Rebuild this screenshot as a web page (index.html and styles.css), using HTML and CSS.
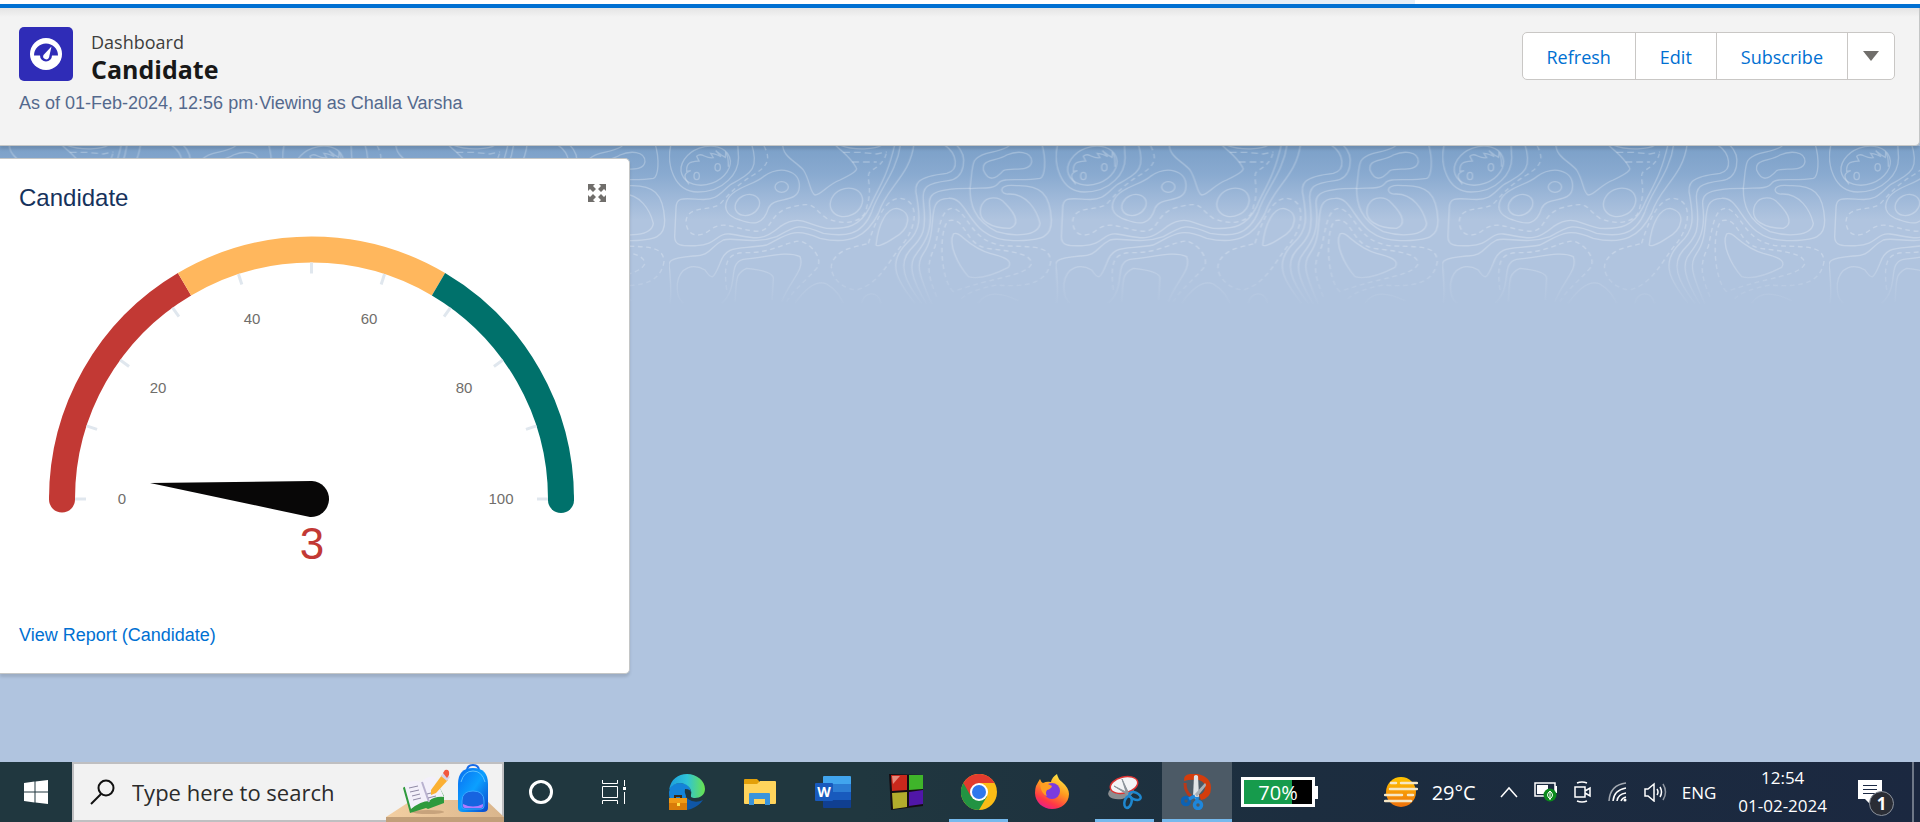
FILE: index.html
```html
<!DOCTYPE html>
<html lang="en">
<head>
<meta charset="utf-8">
<title>Candidate | Dashboard</title>
<link rel="stylesheet" href="styles.css">
</head>
<body>
<div class="nav-strip"><span class="nav-tab"></span></div>

<header class="page-header">
  <div class="heading">
    <div class="identity">
      <svg class="entity-icon" viewBox="0 0 54 54" aria-hidden="true">
        <rect width="54" height="54" rx="5" fill="#2f2cb7"/>
        <circle cx="27" cy="27" r="16" fill="#fff"/>
        <path d="M15 28.500a12 12 0 1 1 24 0h-6a6 6 0 0 1-12 0z" fill="#2f2cb7"/>
        <path d="M32.500 19.500L30 30.500a3 3 0 1 1-5.500-2.500z" fill="#fff"/>
      </svg>
      <div class="titles">
        <span class="kind">Dashboard</span>
        <h1 class="name">Candidate</h1>
      </div>
    </div>
    <p class="as-of">As of 01-Feb-2024, 12:56 pm·Viewing as Challa Varsha</p>
  </div>
  <div class="actions">
    <button class="action">Refresh</button>
    <button class="action">Edit</button>
    <button class="action">Subscribe</button>
    <button class="action action-more" aria-label="More actions"><svg width="16" height="10" viewBox="0 0 16 10"><path d="M0 0h16L8 10z" fill="#706e6b"/></svg></button>
  </div>
</header>

<main class="canvas">
  <svg class="topo" aria-hidden="true">
    <defs>
      <linearGradient id="sky" x1="0" y1="0" x2="0" y2="1">
        <stop offset="0" stop-color="#7ba0c8"/>
        <stop offset=".16" stop-color="#89aad0"/>
        <stop offset=".3" stop-color="#9fb9d9"/>
        <stop offset=".42" stop-color="#b0c4df"/>
        <stop offset="1" stop-color="#b0c4df"/>
      </linearGradient>
      <linearGradient id="fade" x1="0" y1="0" x2="0" y2="1">
        <stop offset=".62" stop-color="#b0c4df" stop-opacity="0"/>
        <stop offset=".92" stop-color="#b0c4df"/>
      </linearGradient>
      <pattern id="contours" x="147" y="0" width="1160" height="600" patternUnits="userSpaceOnUse" patternTransform="translate(620 -16) scale(.33333)">
        <g transform="translate(-147 0)" fill="none" stroke="#fff" stroke-opacity=".26" stroke-width="4">
          <path d="M152 48C140 100 160 186 233 186C310 186 360 130 355 75L353 40"/>
          <ellipse cx="257" cy="107" rx="76" ry="56" transform="rotate(-20 257 107)"/>
          <path d="M207 163C190 140 190 130 212 122L200 124C198 95 215 95 237 93L230 79C245 65 255 87 280 83L272 70C285 72 300 78 303 80L287 62L304 75L316 82L317 68C325 75 325 95 325 110"/>
          <ellipse cx="230" cy="138" rx="8" ry="11"/><ellipse cx="293" cy="112" rx="8" ry="11"/>
          <path d="M394 40C420 120 390 130 330 165C300 190 290 212 240 208C190 205 168 200 168 235L164 320C164 350 190 348 230 347C290 345 290 308 330 312C400 322 420 340 480 290C540 250 560 285 620 295C680 298 720 290 750 230C770 180 800 150 825 40"/>
          <path stroke-dasharray="14 11" d="M432 48C455 90 440 110 400 135C350 165 330 190 300 222C270 245 200 225 198 275C200 320 240 325 270 300C310 270 340 295 400 303C460 310 440 260 500 235C590 210 570 230 620 265C680 290 735 275 740 230C760 170 735 140 750 125C790 100 795 85 800 65"/>
          <path d="M328 200C350 170 400 165 430 140C480 105 540 120 538 170C535 225 460 195 445 235C430 285 400 285 360 270C310 255 310 225 328 200Z"/>
          <ellipse cx="382" cy="225" rx="38" ry="30" transform="rotate(-25 382 225)"/><ellipse cx="485" cy="171" rx="20" ry="16"/>
          <path d="M488 40C485 80 530 95 550 120C570 150 570 190 585 195C605 195 620 165 660 150C700 130 715 120 708 112C690 80 665 65 645 44"/>
          <ellipse cx="679" cy="217" rx="50" ry="41" transform="rotate(-25 679 217)"/>
          <path d="M842 40C830 130 775 180 755 245C725 320 670 320 610 310C540 280 530 285 470 320C400 345 340 320 310 330C270 350 270 380 220 378C140 385 145 395 149 420C152 460 155 490 150 520"/>
          <path d="M882 40C870 140 800 170 775 250C740 320 690 345 600 325C520 290 500 315 440 345C360 360 320 340 300 400C280 450 275 450 255 420C220 400 180 410 172 460C170 500 180 510 190 520"/>
          <path d="M768 345C775 280 800 235 830 235C880 245 870 300 820 325C790 345 770 350 768 345Z"/>
          <path stroke-dasharray="14 11" d="M745 340C770 260 800 205 840 205C900 210 890 290 850 340C800 400 780 460 710 480C650 475 620 420 640 390C665 350 720 350 745 340"/>
          <path d="M975 46C1010 70 1020 120 980 130C890 140 880 160 890 200C900 260 905 300 860 340C800 400 830 450 885 520"/>
          <path d="M1010 46C1045 80 1035 145 985 152C920 160 905 170 910 215C920 300 910 320 870 360C835 400 850 450 905 520"/>
          <path d="M1050 175C920 175 925 200 930 240C935 300 920 330 890 370C865 400 870 440 920 522"/>
          <path d="M935 522C890 420 890 400 910 370C960 300 910 205 985 205C1050 200 1040 330 1180 332C1270 332 1295 320 1294 270C1290 190 1260 165 1190 167C1130 160 1140 195 1165 192C1220 190 1250 240 1260 280C1255 320 1180 320 1130 305C1060 270 1050 220 1050 175C1060 100 1050 85 1100 70C1150 60 1170 50 1172 40"/>
          <path d="M1090 120C1085 85 1130 95 1160 75C1190 62 1235 62 1235 95C1230 130 1170 110 1150 122C1125 150 1105 155 1090 120Z"/>
          <path d="M1265 40C1280 90 1275 140 1260 145C1200 155 1150 140 1135 160C1120 180 1080 172 1050 176"/>
          <path d="M1085 225C1100 195 1140 200 1155 220C1195 260 1195 285 1170 295C1120 295 1065 275 1085 225Z"/>
          <path d="M1000 312C985 340 1010 400 1045 440C1080 450 1130 430 1165 412C1180 390 1150 380 1110 370C1040 350 1020 300 1000 312Z"/>
          <path stroke-dasharray="14 11" d="M1000 485C960 450 955 300 985 272C1040 260 1030 340 1100 355C1180 365 1230 370 1235 400C1220 440 1120 440 1000 485"/>
          <path stroke-dasharray="14 11" d="M950 500C920 430 920 400 945 350C960 280 965 235 1000 235C1050 250 1050 340 1160 348C1250 350 1290 350 1292 395C1280 470 1200 470 1130 465C1060 480 1040 490 1020 510"/>
          <path stroke-dasharray="14 11" d="M320 480C310 400 320 370 370 368C460 370 480 340 540 333C580 345 610 390 590 415C560 450 520 480 500 515"/>
          <path d="M305 520C360 470 320 400 370 388C430 385 500 360 540 380C555 420 510 450 485 515"/>
          <path d="M345 515C350 450 345 430 380 415C430 420 460 430 460 445L456 510"/>
          <path d="M525 520C560 470 590 450 620 462C650 480 660 500 670 520M725 520C730 485 775 480 783 520M1075 520C1100 480 1150 490 1195 512"/>
          <path d="M662 46C700 62 770 58 784 46"/>
          <path stroke-dasharray="20 12" d="M670 67H720L770 72L800 66M697 96H770"/>
        </g>
      </pattern>
    </defs>
    <rect width="100%" height="176" fill="url(#sky)"/>
    <rect width="100%" height="176" fill="url(#contours)"/>
    <rect width="100%" height="176" fill="url(#fade)"/>
  </svg>

  <section class="card">
    <div class="card-head">
      <h2 class="card-title">Candidate</h2>
      <button class="expand" aria-label="Expand"><svg width="18" height="18" viewBox="0 0 18 18"><g fill="#706e6b"><path d="M0 0h7L5 2l3 3-3 3-3-3-2 2z"/><path d="M18 0v7l-2-2-3 3-3-3 3-3-2-2z"/><path d="M0 18v-7l2 2 3-3 3 3-3 3 2 2z"/><path d="M18 18h-7l2-2-3-3 3-3 3 3 2-2z"/></g></svg></button>
    </div>
    <svg class="gauge" viewBox="0 0 624 350" role="img" aria-label="Gauge: 3 of 100">
      <g fill="none" stroke-width="26">
        <path d="M62 269V269.500" stroke="#c23934" stroke-linecap="round"/>
        <path d="M561 269V270" stroke="#00716b" stroke-linecap="round"/>
        <path d="M62 270V269A249.500 249.500 0 0 1 184.500 54.240" stroke="#c23934"/>
        <path d="M184.500 54.240A249.500 249.500 0 0 1 438.500 54.240" stroke="#ffb75d"/>
        <path d="M438.500 54.240A249.500 249.500 0 0 1 561 269V271" stroke="#00716b"/>
      </g>
      <g stroke="#e0e7ee" stroke-width="3">
        <path id="tick" d="M75 269h11"/>
        <use href="#tick" transform="rotate(18 311.500 269)"/><use href="#tick" transform="rotate(36 311.500 269)"/>
        <use href="#tick" transform="rotate(54 311.500 269)"/><use href="#tick" transform="rotate(72 311.500 269)"/>
        <use href="#tick" transform="rotate(90 311.500 269)"/><use href="#tick" transform="rotate(108 311.500 269)"/>
        <use href="#tick" transform="rotate(126 311.500 269)"/><use href="#tick" transform="rotate(144 311.500 269)"/>
        <use href="#tick" transform="rotate(162 311.500 269)"/><use href="#tick" transform="rotate(180 311.500 269)"/>
      </g>
      <g class="scale">
        <text x="122" y="274">0</text><text x="158" y="163">20</text><text x="252" y="94">40</text>
        <text x="369" y="94">60</text><text x="464" y="163">80</text><text x="501" y="274">100</text>
      </g>
      <path d="M150 253L312 251A18 18 0 0 1 310 287Z" fill="#080707"/>
      <text class="value" x="312" y="329">3</text>
    </svg>
    <a class="report" href="#">View Report (Candidate)</a>
  </section>
</main>

<footer class="taskbar">
  <button class="start" aria-label="Start"><svg width="24" height="24" viewBox="0 0 24 24"><path fill="#fff" d="M0 3l10.500-1.500v10H0zM11.500 1.400L24 0v11.500H11.500zM0 12.500h10.500v10L0 21zM11.500 12.500H24V24l-12.500-1.500z"/></svg></button>
  <label class="search">
    <svg width="25" height="26" viewBox="0 0 25 26" fill="none" stroke="#111" stroke-width="2"><circle cx="16" cy="9" r="7.500"/><path d="M11 15L1 25"/></svg>
    <input type="text" placeholder="Type here to search" aria-label="Search">
    <svg class="doodle" width="118" height="58" viewBox="0 0 118 58" aria-hidden="true">
      <defs>
        <linearGradient id="bag" x1="0" y1="0" x2="1" y2="1"><stop offset="0" stop-color="#0a6cf0"/><stop offset=".5" stop-color="#0ba0ff"/><stop offset="1" stop-color="#0a45cc"/></linearGradient>
        <linearGradient id="desk" x1="0" y1="0" x2="1" y2="0"><stop offset="0" stop-color="#f3cfa2"/><stop offset="1" stop-color="#d9b58c"/></linearGradient>
      </defs>
      <path d="M26 36H100L118 53H0z" fill="url(#desk)"/><rect y="53" width="118" height="5" fill="#c29f79"/>
      <ellipse cx="42" cy="48" rx="16" ry="2" fill="#c7a37c"/>
      <path d="M17 24l7 25 16-5 2 1 16-6V32l-9-17-31 8z" fill="#2f9a3d"/>
      <path d="M18 20q9-5 17-2 6-6 14-5l9 20q-9-1-15 4-8 0-18 8z" fill="#f3f0fa"/>
      <path d="M36 18l7 20" stroke="#b9b2cf" stroke-width="2"/>
      <path d="M23 24l9-2M24 28l9-2M26 32l8-2M27 36l8-2M41 30l8-2M42 34l8-2" stroke="#8f8aa5"/>
      <path d="M45 26l11-15 6 5-12 13-5 2z" fill="#fbb034"/><path d="M55 12l3-4 6 5-3 4z" fill="#d8d3e6"/><path d="M57 9l2-3q5-1 4 5l-2 3z" fill="#f2583e"/>
      <path d="M81 7q0-6 6-6t6 6" fill="none" stroke="#176be8" stroke-width="2"/>
      <path d="M72 44V20q0-16 15-16t15 16v24q0 4-5 4H77q-5 0-5-4z" fill="url(#bag)"/>
      <path d="M75 18q3-11 12-11t12 11" fill="none" stroke="#5cc2ff"/>
      <path d="M76 43V37q0-10 11-10t11 10v5q0 3-3 3H79q-3 0-3-2z" fill="#1764e0" stroke="#3aa8ff"/><path d="M77 40q10 5 20 0v2q0 2-2 2H79q-2 0-2-2z" fill="#b07aff"/>
    </svg>
  </label>
  <nav class="apps">
    <button class="app" aria-label="Cortana"><svg width="26" height="26"><circle cx="13" cy="13" r="10.500" fill="none" stroke="#fff" stroke-width="3"/></svg></button>
    <button class="app" aria-label="Task view"><svg width="26" height="24" viewBox="0 0 26 24" fill="none" stroke="#fff"><path d="M1.500 0v3.500h15V0M1.500 24v-3.500h15V24M1.500 6.500h15v11h-15zM23.500 0v6M23.500 12v12"/><path fill="#fff" stroke="none" d="M22 7h3v3h-3z"/></svg></button>
    <button class="app" aria-label="Edge"><svg width="36" height="36" viewBox="0 0 36 36">
      <defs><linearGradient id="e1"><stop offset="0" stop-color="#1b9ede"/><stop offset=".5" stop-color="#2fc3d8"/><stop offset="1" stop-color="#6ae34d"/></linearGradient></defs>
      <path d="M1 23C-1 35 12 38 22 35q8-3 12-9-8 4-15-1c-5-4-4-10-1-12z" fill="#0f56a6"/>
      <path d="M0 18q1-9 11-9 10 0 11 9-4-1-5 3 0 7-5 12Q0 33 0 18z" fill="#1483d8"/>
      <path d="M0 16C2 5 9 0 18 0c10 0 18 7 18 15 0 6-5 9-10 9-3 0-5-1-4-3 2-7-5-12-11-12Q4 9 0 16z" fill="url(#e1)"/>
      <path d="M16 15q6 0 6 4-1 2 0 4-3 1-5-1-2-4-1-7z" fill="#20373f"/>
      <rect y="24" width="18" height="12" fill="#d97b09"/><path d="M0 24h18v5H0z" fill="#f09a17"/><path d="M6 24v-2h6v2" fill="none" stroke="#3d2a12" stroke-width="2"/><rect x="8" y="29" width="3" height="3" fill="#ffe14a"/></svg></button>
    <button class="app" aria-label="File Explorer"><svg width="32" height="26" viewBox="0 0 32 26"><path d="M0 1q0-1 1-1h12l2 2v5H0z" fill="#e3a009"/><path d="M0 5h13l3-3h15q1 0 1 1v21q0 1-1 1H1q-1 0-1-1z" fill="#ffd45c"/><path d="M5 26V15q0-1 1-1h19q1 0 1 1v11h-5v-6H10v6z" fill="#3a94dc"/></svg></button>
    <button class="app" aria-label="Word"><svg width="36" height="32" viewBox="0 0 36 32"><path d="M8 1q0-1 1-1h26q1 0 1 1v7H8z" fill="#41a5ee"/><path d="M8 8h28v8H8z" fill="#2b7cd3"/><path d="M8 16h28v8H8z" fill="#185abd"/><path d="M8 24h28v7q0 1-1 1H9q-1 0-1-1z" fill="#103f91"/><rect y="7" width="18" height="18" rx="1" fill="#185abd"/><text x="9" y="21" class="word-mark">W</text></svg></button>
    <button class="app" aria-label="Tiles"><svg width="34" height="36" viewBox="0 0 34 36"><path d="M0 0l34 1v31L2 36z" fill="#140d12"/><path d="M2 1l16 0v15L3 17z" fill="#c9281c"/><path d="M3 2l8 0-7 8z" fill="#e58a7c"/><path d="M20 1h14v14l-14 1z" fill="#3fb52a"/><path d="M3 19l15-1v15L4 35z" fill="#b3ac2c"/><path d="M20 18l14-2v14l-14 2z" fill="#5016a8"/></svg></button>
    <button class="app running" aria-label="Chrome"><svg width="36" height="36" viewBox="0 0 36 36"><circle cx="18" cy="18" r="18" fill="#fbbc16"/><path d="M2.400 9A18 18 0 0 0 18 36l8-13.500L18 18z" fill="#229342"/><path d="M2.400 9L10 22.500 18 9h15.600A18 18 0 0 0 2.400 9z" fill="#e33b2e"/><circle cx="18" cy="18" r="9" fill="#fff"/><circle cx="18" cy="18" r="7" fill="#2f78ee"/></svg></button>
    <button class="app" aria-label="Firefox"><svg width="34" height="36" viewBox="0 0 34 36">
      <defs><linearGradient id="fx" x1=".8" y1="0" x2=".3" y2="1"><stop offset="0" stop-color="#fff14a"/><stop offset=".45" stop-color="#ff9a1f"/><stop offset=".8" stop-color="#ff3647"/><stop offset="1" stop-color="#e51f8c"/></linearGradient></defs>
      <path d="M1 12q2-4 4-7 1 3 3 4 4-2 8-1 1-5 6-8 1 5 5 8 7 6 7 12c0 9-8 15-17 15S0 28 0 19q0-4 1-7z" fill="url(#fx)"/><circle cx="17" cy="17" r="8" fill="#7a3be0"/><path d="M5 10q6-2 12 2-1 3-5 4-2 3 0 6-6-2-7-12z" fill="#ff9e22"/></svg></button>
    <button class="app running" aria-label="Snipping Tool"><svg width="34" height="36" viewBox="0 0 34 36"><ellipse cx="13" cy="18" rx="13" ry="7" fill="#8b8d90" transform="rotate(-10 13 18)"/><ellipse cx="16" cy="11" rx="14" ry="8" fill="#f4f4f6" stroke="#d33" stroke-width="1.500" transform="rotate(-14 16 11)"/><path d="M14 5l5 16 2-1zM6 12l14 9v-2z" fill="#8d949b" stroke="#8d949b"/><g fill="none" stroke="#1e87cf" stroke-width="2.500"><ellipse cx="27" cy="22" rx="6" ry="3.500" transform="rotate(25 27 22)"/><ellipse cx="20" cy="28" rx="3.500" ry="6" transform="rotate(15 20 28)"/></g></svg></button>
    <button class="app running active" aria-label="Snip"><svg width="32" height="36" viewBox="0 0 32 36"><path d="M3 7Q2 1 9 0h8q13 3 13 14 0 10-10 12l-2-5q6-2 6-8 0-5-6-7-9-1-15 1z" fill="#d43d0c"/><path d="M4 9q0 9 6 13" fill="none" stroke="#b9391a" stroke-width="3"/><path d="M13 2q2-2 4 0l1 20-2 4-4-3z" fill="#dfe3e6"/><path d="M24 9q2 2 0 4l-8 10-2-3z" fill="#a9afb5"/><g fill="none" stroke="#1e87dc" stroke-width="3.500"><circle cx="5" cy="27" r="3.500" stroke="#0b62b5"/><circle cx="17" cy="31" r="3.500"/><path d="M8 25l6-3M16 28v-5"/></g></svg></button>
  </nav>
  <div class="battery"><span class="battery-level">70%</span><span class="battery-tip"></span></div>
  <div class="tray">
    <button class="weather"><svg width="34" height="32" viewBox="0 0 34 32"><defs><linearGradient id="sun" x1="0" y1="0" x2="0" y2="1"><stop offset="0" stop-color="#ffc400"/><stop offset="1" stop-color="#ee700c"/></linearGradient></defs><circle cx="17" cy="16" r="15" fill="url(#sun)"/><g stroke="#f6e7c5" stroke-width="2.500" stroke-linecap="round"><path d="M7 7h5M17 7h16M6 13h27M1 19h17M24 19h5M1 25h26"/></g></svg><span>29°C</span></button>
    <button class="tray-icon" aria-label="Show hidden icons"><svg width="18" height="12" viewBox="0 0 18 12"><path d="M1 11l8-9 8 9" fill="none" stroke="#fff" stroke-width="1.500"/></svg></button>
    <button class="tray-icon" aria-label="Power"><svg width="24" height="20" viewBox="0 0 24 20"><path d="M1 1h20v13H1z" fill="none" stroke="#fff" stroke-width="1.500"/><path d="M3 3h11v9H3z" fill="#fff"/><path d="M22 4v7" stroke="#fff" stroke-width="2"/><circle cx="16" cy="13" r="6.500" fill="#0b8a1c"/><path d="M16 9q5 4 0 8-5-4 0-8v9" fill="none" stroke="#fff"/></svg></button>
    <button class="tray-icon" aria-label="Meet Now"><svg width="18" height="24" viewBox="0 0 18 24" fill="none" stroke="#fff" stroke-width="1.500"><path d="M3 3q5-2 10 0M3 21q5 2 10 0M1 7h10v10H1zM11 11l5-3v8l-5-3"/></svg></button>
    <button class="tray-icon" aria-label="Network"><svg width="20" height="20" viewBox="0 0 20 20" fill="none" stroke="#fff" stroke-width="1.500"><path d="M1 19Q2 3 18 1" opacity=".6"/><path d="M5 19Q6 8 18 6M9 19q1-7 9-8M13 19q1-3 5-4"/><circle cx="17" cy="18" r="1.500" fill="#fff" stroke="none"/></svg></button>
    <button class="tray-icon" aria-label="Volume"><svg width="24" height="20" viewBox="0 0 24 20" fill="none" stroke="#fff" stroke-width="1.500"><path d="M1 7h3l6-5v17l-6-5H1zM13 7q2 3 0 6M16 5q3 5 0 10"/><path d="M19 2q5 8 0 16" opacity=".5"/></svg></button>
    <button class="lang">ENG</button>
    <button class="clock"><span>12:54</span><span>01-02-2024</span></button>
    <button class="notes" aria-label="Notifications, 1 new"><svg width="24" height="24" viewBox="0 0 24 24"><path d="M0 0h24v19H12v5l-5-5H0z" fill="#fff"/><path d="M5 5.500h14M5 9.500h14M5 13.500h14" stroke="#1c2a44"/></svg><span class="badge">1</span></button>
  </div>
  <span class="peek"></span>
</footer>
</body>
</html>
```
FILE: styles.css
```css
* { box-sizing: border-box; }
body {
  margin: 0;
  min-height: 100vh;
  display: flex;
  flex-direction: column;
  background: #b0c4df;
  font-family: "Liberation Sans", Arial, sans-serif;
  overflow-x: hidden;
}
button { border: 0; padding: 0; background: none; font: inherit; color: inherit; }
h1, h2, p { margin: 0; }
svg { display: block; flex: none; }

.nav-strip {
  height: 8px;
  display: flex;
  background: #fff;
  border-bottom: 4px solid #0070d2;
}
.nav-tab { width: 205px; margin-left: 63%; background: #e5eef7; }

.page-header {
  position: relative;
  z-index: 1;
  display: flex;
  justify-content: space-between;
  align-items: flex-start;
  padding: 19px 24px 30px 19px;
  border: 1px solid #c4c6c6;
  border-width: 0 1px 1px 0;
  border-radius: 0 0 5px 0;
  background: linear-gradient(#e4e4e4, #f3f3f3 9px);
  box-shadow: 0 3px 3px rgba(0, 0, 0, .12);
}
.identity { display: flex; gap: 18px; }
.entity-icon { width: 54px; height: 54px; }
.titles { display: flex; flex-direction: column; padding-top: 4px; font-family: "Open Sans", sans-serif; }
.kind { font-size: 18px; line-height: 22px; color: #3e3e3c; }
.name { font-size: 25px; line-height: 32px; font-weight: 700; color: #181818; }
.as-of { margin-top: 6px; font-size: 18px; line-height: 24px; color: #54698d; }

.actions {
  display: flex;
  margin-top: 5px;
  height: 48px;
  border: 1px solid #c9c7c5;
  border-radius: 5px;
  background: #fff;
  font: 18px/48px "Open Sans", sans-serif;
  color: #0070d2;
}
.action { padding: 0 24px; }
.action + .action { border-left: 1px solid #c9c7c5; }
.action-more { padding: 0 15px; }

.canvas { position: relative; flex: 1; padding-top: 12px; }
.topo { position: absolute; top: 0; left: 0; width: 100%; height: 176px; }

.card {
  position: relative;
  width: 630px;
  padding: 25px 0 26px;
  background: #fff;
  border: 1px solid #c4c6c6;
  border-left: 0;
  border-radius: 0 5px 5px 0;
  box-shadow: 0 3px 3px rgba(0, 0, 0, .12);
}
.card-head { display: flex; justify-content: space-between; padding: 0 23px 0 19px; }
.card-title { font-size: 24px; line-height: 28px; font-weight: 400; color: #16325c; }
.expand { align-self: flex-start; }
.gauge { width: 624px; margin-top: 18px; }
.scale { font-size: 15px; fill: #706e6b; text-anchor: middle; }
.value { font-size: 44px; fill: #c23934; text-anchor: middle; }
.report {
  display: block;
  margin: 43px 19px 0;
  font-size: 18px;
  line-height: 24px;
  color: #0070d2;
  text-decoration: none;
}

.taskbar {
  display: flex;
  height: 60px;
  background: linear-gradient(90deg, #20373f, #20373f 45%, #1c2d3f 68%, #1b2840);
  color: #fff;
  font-family: "Open Sans", sans-serif;
}
.start { width: 72px; display: grid; place-items: center; }
.search {
  display: flex;
  align-items: center;
  width: 432px;
  padding-left: 16px;
  border: 2px solid #bfbfc1;
  background: #f2f2f2;
}
.search input {
  flex: 1;
  min-width: 0;
  margin-left: 17px;
  padding: 0;
  border: 0;
  outline: 0;
  background: none;
  font: 22px "Open Sans", sans-serif;
  color: #222;
}
.search input::placeholder { color: #2b2b2b; opacity: 1; }
.doodle { align-self: flex-end; margin: 0 -2px -2px 0; }
.apps { display: flex; }
.app { width: 73px; display: grid; place-items: center; border: 3px solid transparent; border-width: 3px 0; }
.running { width: 59px; margin: 0 7px; border-bottom-color: #76b9ed; }
.active { width: 70px; margin: 0 2px 0 1px; background: #4c5a66; border-top-color: #4c5a66; }
.word-mark { font: 700 14px "Open Sans", sans-serif; fill: #fff; text-anchor: middle; }

.battery { display: flex; align-items: center; margin-left: 7px; }
.battery-level {
  width: 74px;
  height: 30px;
  border: 3px solid #fff;
  background: linear-gradient(90deg, #169b4c 70%, #000 70%);
  font-size: 20px;
  line-height: 26px;
  text-align: center;
}
.battery-tip { width: 3px; height: 13px; background: #fff; }

.tray { display: flex; align-items: center; margin-left: auto; }
.weather { display: flex; align-items: center; gap: 14px; margin-right: 24px; font-size: 20px; }
.tray-icon { margin-right: 16px; }
.lang { margin: 0 22px 0 -2px; font-size: 17px; }
.clock { display: flex; flex-direction: column; align-items: center; font-size: 17px; line-height: 28px; }
.notes { position: relative; margin: 0 30px 0 31px; }
.badge {
  position: absolute;
  left: 11px;
  top: 11px;
  width: 25px;
  height: 25px;
  border: 1px solid #8b929d;
  border-radius: 50%;
  background: #2a2d35;
  font-size: 17px;
  line-height: 23px;
  font-weight: 700;
}
.peek { width: 8px; border-left: 2px solid #6e7888; }
```
